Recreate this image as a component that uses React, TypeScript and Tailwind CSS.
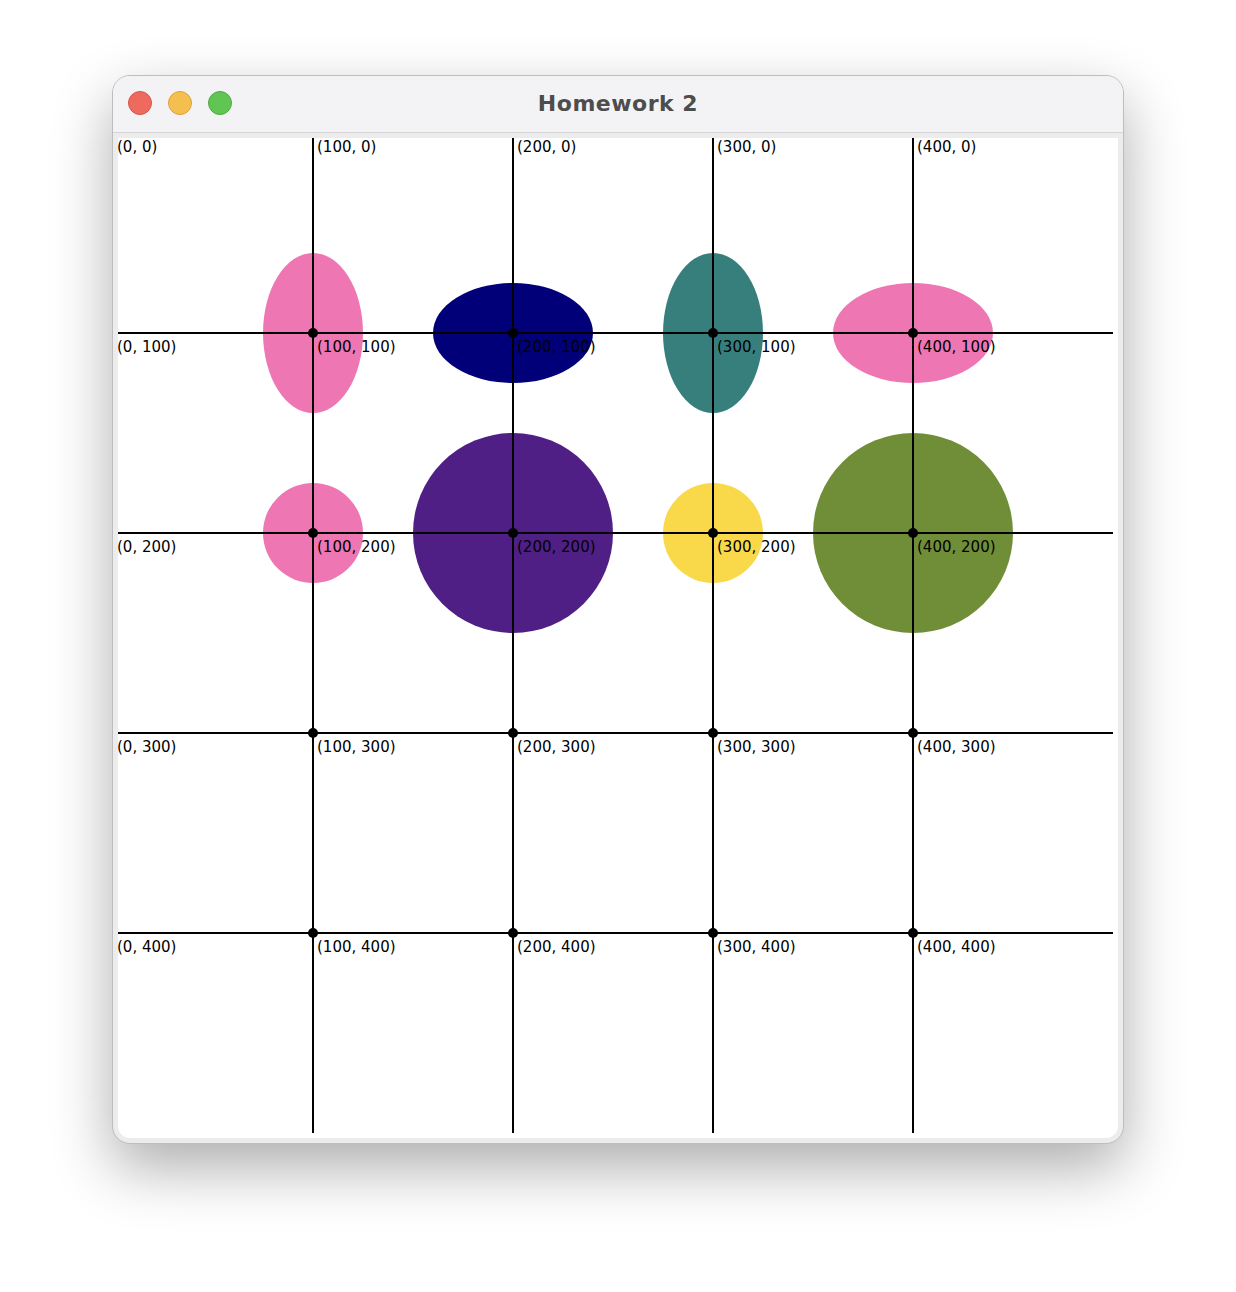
import React from 'react';

const ticks = [0, 100, 200, 300, 400];

// shapes in model units (1 unit = 2px)
const shapes = [
  { cx: 100, cy: 100, rx: 25, ry: 40, fill: '#ee76b3' },
  { cx: 200, cy: 100, rx: 40, ry: 25, fill: '#010078' },
  { cx: 300, cy: 100, rx: 25, ry: 40, fill: '#367f7c' },
  { cx: 400, cy: 100, rx: 40, ry: 25, fill: '#ee76b3' },
  { cx: 100, cy: 200, rx: 25, ry: 25, fill: '#ee76b3' },
  { cx: 200, cy: 200, rx: 50, ry: 50, fill: '#4f1f85' },
  { cx: 300, cy: 200, rx: 25, ry: 25, fill: '#f9d949' },
  { cx: 400, cy: 200, rx: 50, ry: 50, fill: '#708e37' },
];

function Canvas() {
  return (
    <svg width={1000} height={1000} viewBox="5 5 1000 1000" className="block">
      {shapes.map((s, i) => (
        <ellipse key={i} cx={s.cx * 2} cy={s.cy * 2} rx={s.rx * 2} ry={s.ry * 2} fill={s.fill} />
      ))}
      {ticks.slice(1).map((t) => (
        <line key={'v' + t} x1={t * 2} y1={0} x2={t * 2} y2={1000} stroke="#000" strokeWidth={2} />
      ))}
      {ticks.slice(1).map((t) => (
        <line key={'h' + t} x1={0} y1={t * 2} x2={1000} y2={t * 2} stroke="#000" strokeWidth={2} />
      ))}
      {ticks.slice(1).map((x) =>
        ticks.slice(1).map((y) => <circle key={`d${x}-${y}`} cx={x * 2} cy={y * 2} r={5} fill="#000" />)
      )}
      {ticks.map((x) =>
        ticks.map((y) => (
          <text
            key={`t${x}-${y}`}
            x={x * 2 + 4}
            y={y * 2 + 19}
            fontSize={15}
            fill="#000"
            style={{ fontFamily: '"DejaVu Sans", sans-serif' }}
          >
            ({x}, {y})
          </text>
        ))
      )}
    </svg>
  );
}

export default function App() {
  return (
    <div className="w-[1236px] h-[1292px] bg-white pt-[75px] flex justify-center">
      <div className="w-[1012px] h-[1069px] rounded-[18px] border border-[#bdbdbd] bg-[#ececec] overflow-hidden shadow-[0_24px_60px_rgba(0,0,0,0.32)]">
        {/* Title bar */}
        <div className="relative h-[57px] bg-[#f3f3f5] border-b border-[#d5d5d5] flex items-center justify-center">
          <div className="absolute left-[15px] top-[15px] flex gap-[16px]">
            <span className="w-[24px] h-[24px] rounded-full bg-[#ee6a5f] border border-[#d65548]" />
            <span className="w-[24px] h-[24px] rounded-full bg-[#f5bf4f] border border-[#d8a23b]" />
            <span className="w-[24px] h-[24px] rounded-full bg-[#61c554] border border-[#4ea941]" />
          </div>
          <span className="font-['DejaVu_Sans',sans-serif] font-bold text-[22px] tracking-[0.5px] text-[#4d4d4d] leading-none">
            Homework 2
          </span>
        </div>
        {/* Content */}
        <div className="px-[5px] pt-[5px]">
          <div className="w-[1000px] h-[1000px] bg-white rounded-b-[12px] overflow-hidden">
            <Canvas />
          </div>
        </div>
      </div>
    </div>
  );
}
